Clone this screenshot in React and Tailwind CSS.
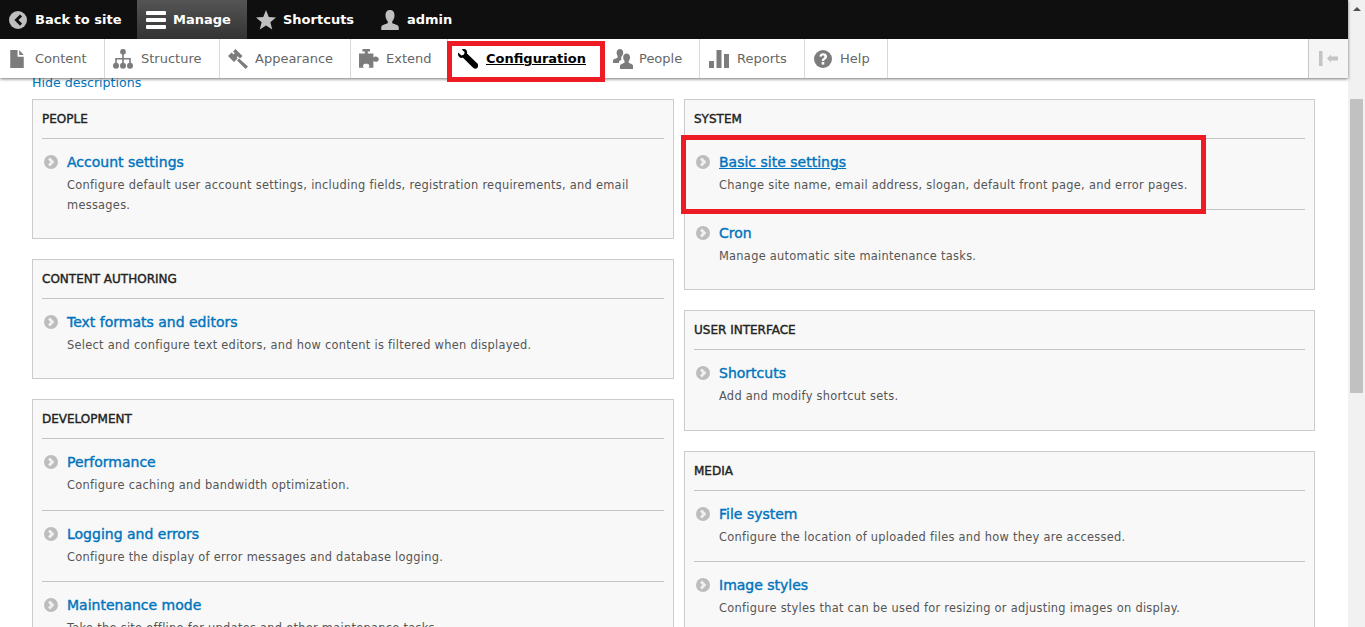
import React from 'react';

const FONT = "font-['DejaVu_Sans','Verdana',sans-serif]";

const Ico = ({ children, className = '', vb = '0 0 16 16' }) => (
    <svg viewBox={vb} className={className} fill="currentColor">{children}</svg>
);

const BackIcon = (p) => <Ico {...p}><circle cx="8" cy="8" r="8" /><path d="M9.8 3 L11.6 4.8 L8.4 8 L11.6 11.2 L9.8 13 L4.8 8 Z" fill="#0f0f0f" /></Ico>;
const MenuIcon = (p) => <Ico {...p} vb="0 0 20 18"><rect y="0" width="20" height="4" rx="1" /><rect y="7" width="20" height="4" rx="1" /><rect y="14" width="20" height="4" rx="1" /></Ico>;
const StarIcon = (p) => <Ico {...p}><path d="M8 0 L10.2 5.6 L16 6 L11.5 9.8 L13 15.6 L8 12.4 L3 15.6 L4.5 9.8 L0 6 L5.8 5.6 Z" /></Ico>;
const UserIcon = (p) => <Ico {...p}><path d="M8 0 C10.4 0 11.6 1.8 11.6 4.2 C11.6 6.4 10.8 8 9.8 9 L9.8 10.6 C11.5 11.4 14.6 11.8 15 13.6 L15 16 L1 16 L1 13.6 C1.4 11.8 4.5 11.4 6.2 10.6 L6.2 9 C5.2 8 4.4 6.4 4.4 4.2 C4.4 1.8 5.6 0 8 0 Z" /></Ico>;
const FileIcon = (p) => <Ico {...p}><path d="M2 0 L8.5 0 L8.5 6 L14 6 L14 16 L2 16 Z M10 0 L14 4.5 L10 4.5 Z" /></Ico>;
const TreeIcon = (p) => <Ico {...p} vb="0 0 20 20"><rect x="7.2" y="0" width="5.6" height="5.6" rx="2.4" /><path d="M9.2 5 H10.8 V9 H17.8 V14 H16.2 V10.6 H10.8 V14 H9.2 V10.6 H3.8 V14 H2.2 V9 H9.2 Z" /><circle cx="3" cy="16.8" r="3" /><circle cx="10" cy="16.8" r="3" /><circle cx="17" cy="16.8" r="3" /></Ico>;
const HammerIcon = (p) => <Ico {...p} vb="0 0 20 20"><path d="M7.5 0 L14.5 7 L12 9.5 L9.8 7.3 L8 9 L5 6 L6.8 4.3 L5 2.5 Z M0 7 L3.6 3.6 L9.6 9.6 L6 13 Z M9 11.5 L11 9.5 L20 17.6 L17.6 20 Z" /></Ico>;
const PuzzleIcon = (p) => <Ico {...p} vb="0 0 20 20"><path d="M3.5 0 H11 V2.6 H8.8 V4.6 H14.4 V8.4 C15.6 7 19.8 7.4 19.8 10.2 C19.8 13 15.6 13.4 14.4 12 V18.8 H9.6 C11 17 10.4 14.8 7.2 14.8 C4 14.8 3.4 17 4.8 18.8 H0 V4.6 H5.8 V2.6 H3.5 Z" /></Ico>;
const WrenchIcon = (p) => <Ico {...p} vb="0 0 20 20"><path d="M5.4 0 C8.2 -0.2 9.6 2 9 4.6 L19.4 14.6 C20.4 15.6 20.4 17 19.6 18.4 C18.4 20 16.6 20.2 15.4 19 L5 8.8 C2.4 9.4 0 7.8 0 5 L0.2 3.6 L3.4 6.4 L6 5.6 L6.6 3 L3.6 0.4 Z" /></Ico>;
const PeopleIcon = (p) => <Ico {...p} vb="0 0 20 20"><path d="M7 0 C9 0 10.2 1.6 10.2 3.6 C10.2 5 9.8 6.2 9 7 C8 8 7.8 9.4 8.8 10 L6 12.6 L6 14 L0 14 L0 11.2 C0.6 9.6 3.4 9.4 4.6 8.4 L4.6 7 C4 6.2 3.6 5 3.6 3.6 C3.6 1.6 5 0 7 0 Z" /><path d="M13.6 4.6 C15.8 4.6 17 6.4 17 8.4 C17 10 16.4 11.2 15.6 12 L15.6 13.6 C16.8 14.6 19.4 15 20 16.6 L20 20 L7 20 L7 16.6 C7.6 15 10.4 14.6 11.6 13.6 L11.6 12 C10.8 11.2 10.2 10 10.2 8.4 C10.2 6.4 11.4 4.6 13.6 4.6 Z" /></Ico>;
const BarsIcon = (p) => <Ico {...p} vb="0 0 20 18"><rect x="0" y="11" width="5" height="7" /><rect x="7.5" y="0" width="5" height="18" /><rect x="15" y="4" width="5" height="14" /></Ico>;
const HelpIcon = (p) => <Ico {...p} vb="0 0 18 18"><circle cx="9" cy="9" r="9" /><path d="M5.4 6.6 C5.6 4.4 7 3.2 9.2 3.2 C11.4 3.2 13 4.4 13 6.4 C13 8 12 8.8 11 9.4 C10.4 9.8 10.2 10.2 10.2 11 L7.8 11 C7.8 9.6 8.2 8.8 9.2 8.2 C10 7.7 10.4 7.3 10.4 6.6 C10.4 5.8 9.9 5.4 9.1 5.4 C8.3 5.4 7.8 5.9 7.7 6.8 Z" fill="#fff" /><rect x="7.7" y="12" width="2.6" height="2.6" fill="#fff" /></Ico>;
const Chevron = () => (
    <svg viewBox="0 0 14 14" className="w-3.5 h-3.5 shrink-0 mt-[3px]">
        <circle cx="7" cy="7" r="7" fill="#bdbdbd" />
        <path d="M6 2.6 L10.4 7 L6 11.4 L4 9.4 L6.4 7 L4 4.6 Z" fill="#f0f0f0" />
    </svg>
);

const topItems = [
    { label: 'Back to site', icon: BackIcon, size: 'w-[18px] h-[18px] ml-[9px] text-[#bfbfbf]', w: 'w-[137px]', gap: 'gap-[8px]' },
    { label: 'Manage', icon: MenuIcon, size: 'w-5 h-[18px] ml-[9px] text-white', w: 'w-[110px]', gap: 'gap-[7px]', active: true },
    { label: 'Shortcuts', icon: StarIcon, size: 'w-5 h-5 ml-[9px] text-[#bfbfbf]', w: 'w-[123px]', gap: 'gap-[7px]' },
    { label: 'admin', icon: UserIcon, size: 'w-5 h-5 ml-[10px] text-[#bfbfbf]', w: 'w-[100px]', gap: 'gap-[7px]' },
];

const trayItems = [
    { label: 'Content', icon: FileIcon, size: 'w-[18px] h-[18px] ml-[8px]', w: 'w-[105px]', gap: 'gap-[9px]' },
    { label: 'Structure', icon: TreeIcon, size: 'w-5 h-5 ml-[8px]', w: 'w-[115px]', gap: 'gap-[8px]' },
    { label: 'Appearance', icon: HammerIcon, size: 'w-5 h-5 ml-[8px]', w: 'w-[131px]', gap: 'gap-[7px]' },
    { label: 'Extend', icon: PuzzleIcon, size: 'w-5 h-5 ml-[8px]', w: 'w-[97px]', gap: 'gap-[7px]' },
    { label: 'Configuration', icon: WrenchIcon, size: 'w-5 h-5 ml-[10px] text-black', w: 'w-[156px]', gap: 'gap-[8px]', active: true },
    { label: 'People', icon: PeopleIcon, size: 'w-5 h-5 ml-[9px]', w: 'w-[96px]', gap: 'gap-[6px]' },
    { label: 'Reports', icon: BarsIcon, size: 'w-5 h-[18px] ml-[9px]', w: 'w-[105px]', gap: 'gap-[8px]' },
    { label: 'Help', icon: HelpIcon, size: 'w-[18px] h-[18px] ml-[9px]', w: 'w-[83px]', gap: 'gap-[8px]' },
];

const leftPanels = [
    {
        title: 'People',
        items: [{ name: 'Account settings', desc: 'Configure default user account settings, including fields, registration requirements, and email messages.' }],
    },
    {
        title: 'Content authoring',
        items: [{ name: 'Text formats and editors', desc: 'Select and configure text editors, and how content is filtered when displayed.' }],
    },
    {
        title: 'Development',
        items: [
            { name: 'Performance', desc: 'Configure caching and bandwidth optimization.' },
            { name: 'Logging and errors', desc: 'Configure the display of error messages and database logging.' },
            { name: 'Maintenance mode', desc: 'Take the site offline for updates and other maintenance tasks.' },
        ],
    },
];

const rightPanels = [
    {
        title: 'System',
        items: [
            { name: 'Basic site settings', desc: 'Change site name, email address, slogan, default front page, and error pages.', marked: true },
            { name: 'Cron', desc: 'Manage automatic site maintenance tasks.' },
        ],
    },
    {
        title: 'User interface',
        items: [{ name: 'Shortcuts', desc: 'Add and modify shortcut sets.' }],
    },
    {
        title: 'Media',
        items: [
            { name: 'File system', desc: 'Configure the location of uploaded files and how they are accessed.' },
            { name: 'Image styles', desc: 'Configure styles that can be used for resizing or adjusting images on display.' },
        ],
    },
];

const Panel = ({ title, items }) => (
    <section className="border border-[#ccc] bg-[#f8f8f8] px-[9px] pb-[9px]">
        <h3 className="h-[39px] pt-[11px] border-b border-[#c4c4c4] font-normal text-[12px] leading-[17px] uppercase text-[#222] [-webkit-text-stroke:0.4px_#222]">
            {title}
        </h3>
        {items.map((item, i) => (
            <div key={item.name} className={`relative flex gap-[9px] pl-[2px] pt-[13px] pb-[14.2px] ${i > 0 ? 'border-t border-[#c4c4c4]' : ''}`}>
                <Chevron />
                <div>
                    <a href="#" className={`block font-normal text-[14px] leading-[20px] text-[#0074bd] [-webkit-text-stroke:0.4px_#0074bd] ${item.marked ? 'underline' : ''}`}>
                        {item.name}
                    </a>
                    <p className="mt-[3px] text-[11.4px] leading-[20px] tracking-[0.28px] text-[#555] pr-[20px]">{item.desc}</p>
                </div>
                {item.marked && (
                    <div className="absolute z-10 left-[-13px] top-[-4px] w-[525px] h-[79px] border-[5px] border-[#ed1c24]" />
                )}
            </div>
        ))}
    </section>
);

export default function App() {
    return (
        <div className={`h-[627px] flex overflow-hidden bg-white ${FONT}`}>
            <div className="flex-1 min-w-0 flex flex-col">
                <header className="relative z-10 shrink-0 shadow-[0_1px_3px_rgba(0,0,0,0.55)]">
                    <nav className="h-[39px] bg-[#0f0f0f] flex">
                        {topItems.map((t) => {
                            const Icon = t.icon;
                            return (
                                <a key={t.label} href="#" className={`${t.w} shrink-0 flex items-center ${t.gap} font-bold text-[13px] text-white ${t.active ? 'bg-gradient-to-b from-[#555] to-[#333]' : ''}`}>
                                    <Icon className={t.size} />
                                    {t.label}
                                </a>
                            );
                        })}
                    </nav>
                    <nav className="h-[39px] bg-white flex">
                        {trayItems.map((t) => {
                            const Icon = t.icon;
                            return (
                                <a key={t.label} href="#" className={`relative ${t.w} shrink-0 flex items-center ${t.gap} text-[13px] border-r border-[#d9d9d9] ${t.active ? 'border-r-0 font-bold text-black underline' : 'text-[#666]'}`}>
                                    <Icon className={`${t.size} shrink-0 ${t.active ? '' : 'text-[#7c7c7c]'}`} />
                                    {t.label}
                                    {t.active && <span className="absolute left-[-1px] top-[2px] w-[158px] h-[41px] border-[5px] border-[#ed1c24]" />}
                                </a>
                            );
                        })}
                        <button className="ml-auto w-[40px] h-full border-l border-[#c8c8c8] bg-[#f5f5f5] flex items-center justify-center" aria-label="Collapse">
                            <svg viewBox="0 0 19 15" className="w-[19px] h-[15px] text-[#c4c4c4]" fill="currentColor">
                                <rect x="0" y="0" width="3.5" height="15" />
                                <path d="M8 7.5 L12 3.5 V5.5 H19 V9.5 H12 V11.5 Z" />
                            </svg>
                        </button>
                    </nav>
                </header>
                <main className="flex-1 min-h-0 overflow-hidden pl-[32px]">
                    <a href="#" className="block -mt-[4px] h-[25px] text-[12.6px] leading-[18px] text-[#0074bd]">Hide descriptions</a>
                    <div className="grid grid-cols-[642px_631px] gap-x-[10px]">
                        <div className="flex flex-col gap-5">
                            {leftPanels.map((p) => <Panel key={p.title} {...p} />)}
                        </div>
                        <div className="flex flex-col gap-5">
                            {rightPanels.map((p) => <Panel key={p.title} {...p} />)}
                        </div>
                    </div>
                </main>
            </div>
            <aside className="w-[17px] shrink-0 bg-[#f1f1f1] flex flex-col items-center pt-[7px]">
                <span className="w-0 h-0 border-x-[4px] border-x-transparent border-b-[4px] border-b-[#505050]" />
                <span className="mt-[88px] w-[13px] h-[294px] bg-[#c1c1c1]" />
            </aside>
        </div>
    );
}
